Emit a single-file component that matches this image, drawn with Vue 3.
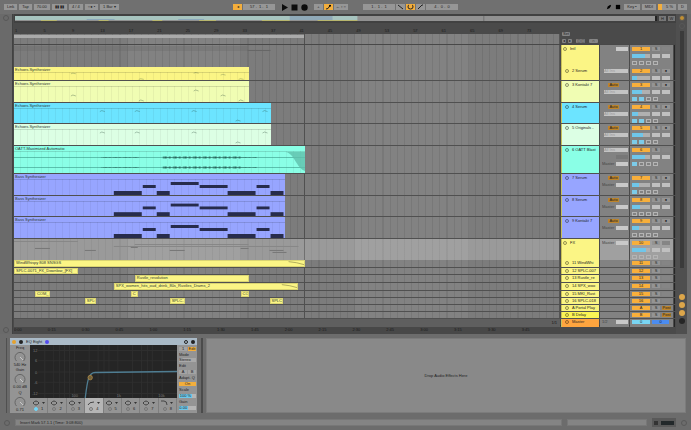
<script setup>
// Horizontal extent of the arrangement, in timeline units.
const SPAN = 546
const pct = (v) => (v / SPAN) * 100 + '%'

const bassNotes = [
  [100, 28, 2], [129, 13, 1], [143, 13, 2], [157, 28, 0],
  [186, 28, 1], [214, 28, 2], [243, 13, 1], [257, 13, 2],
]
const bassRows = [8, 11, 17]

const chirpsA = [[57, 14], [125, 19], [180, 9], [207, 14], [225, 19]]
const chirpsB = [[86, 8], [121, 8], [178, 8], [222, 18], [249, 8]]
const chirpsC = [[57, 10], [125, 19], [180, 9], [207, 12], [225, 19]]

const wave = []
for (let i = 0; i < 78; i++) {
  const x = 87 + i * 2
  const loud = x > 147 && x < 229
  if (x > 124 && x < 148) continue
  const k = (i * 7) % 5
  wave.push({ x, h: loud ? (k > 1 ? 2 : 1) : 1, o: loud ? 0.3 + k * 0.1 : 0.2 + k * 0.06 })
}

const synth = 'Echoes.Synthesizer'
const bass = 'Bass Synthesizer'

const tracks = [
  { name: 'Intl', size: 'h22', color: 'yellow', group: true, io: ['half'], no: '1', lines: 3, pan: 12 },
  { name: '2 Serum', size: 'h14', color: 'yellow', io: ['box'], no: '2', lines: 2, pan: 5, rec: true,
    clips: [{ x: 0, w: 235, text: synth, kind: 'chirp', marks: chirpsC }] },
  { name: '3 Kontakt 7', size: 'h22', color: 'lime', io: ['auto', 'box'], no: '3', lines: 3, pan: 9, send: 2, rec: true,
    clips: [{ x: 0, w: 235, text: synth, kind: 'chirp', marks: chirpsA }] },
  { name: '4 Serum', size: 'h21', color: 'cyan', io: ['auto', 'box'], no: '4', lines: 3, pan: 6, send: 2, rec: true,
    clips: [{ x: 0, w: 257, text: synth, kind: 'chirp', marks: chirpsB }] },
  { name: '5 Originals -', size: 'h22', color: 'mint', io: ['auto', 'box'], no: '5', lines: 3, pan: 10, send: 2, rec: true,
    clips: [{ x: 0, w: 257, text: synth, kind: 'chirp', marks: chirpsB }] },
  { name: '6 OATT Blast', size: 'h28', color: 'aqua', io: ['box', 'pair', 'half'], no: '6', lines: 3, pan: 12, send: 1,
    clips: [{ x: 0, w: 292, text: 'OATT-Maximized Automatio', kind: 'audio' }] },
  { name: '7 Serum', size: 'h22', color: 'blue', io: ['auto', 'half'], no: '7', lines: 3, pan: 7, send: 1, rec: true,
    clips: [{ x: 0, w: 271, text: bass, kind: 'bass' }] },
  { name: '8 Serum', size: 'h21', color: 'blue', io: ['auto', 'half'], no: '8', lines: 3, pan: 8, rec: true,
    clips: [{ x: 0, w: 271, text: bass, kind: 'bass' }] },
  { name: '9 Kontakt 7', size: 'h22', color: 'blue', io: ['auto', 'half'], no: '9', lines: 3, pan: 7, rec: true,
    clips: [{ x: 0, w: 271, text: bass, kind: 'bass' }] },
  { name: 'FX', size: 'h21', color: 'yellow', group: true, selected: true, io: ['master'], no: '10', lines: 3, pan: 13 },
  { name: '11 WindWhi', size: 'h8', color: 'yellow', io: [], no: '11', lines: 1,
    clips: [{ x: 0, w: 292, text: 'WindWhispy 808 SNSGS', kind: 'fade' }] },
  { name: '12 SPLC-007', size: 'h7', color: 'yellow', io: [], no: '12', lines: 1,
    clips: [{ x: 0, w: 64, text: 'SPLC-0071_FX_Downlow_[FX]' }] },
  { name: '13 Rustle_re', size: 'h8', color: 'yellow', io: [], no: '13', lines: 1,
    clips: [{ x: 121, w: 114, text: 'Rustle_revolution' }] },
  { name: '14 SPX_woo', size: 'h8', color: 'yellow', io: [], no: '14', lines: 1,
    clips: [{ x: 100, w: 185, text: 'SPX_women_hits_oud_drink_80s_Rustles_Drams_2', kind: 'fade' }] },
  { name: '15 MKI_Rust', size: 'h7', color: 'yellow', io: [], no: '15', lines: 1,
    clips: [{ x: 21, w: 15, text: 'COM_' }, { x: 117, w: 7, text: 'C' }, { x: 227, w: 8, text: 'CO' }] },
  { name: '16 SPLC-018', size: 'h7', color: 'yellow', io: [], no: '16', lines: 1,
    clips: [{ x: 71, w: 11, text: 'SPLC' }, { x: 156, w: 15, text: 'SPLC-' }, { x: 256, w: 14, text: 'SPLC' }] },
  { name: 'A Portal Play', size: 'h7', color: 'lemon', io: [], no: 'A', lines: 1, post: true },
  { name: 'B Delay', size: 'h7', color: 'bright', io: [], no: 'B', lines: 1, post: true },
]

const bars = Array.from({ length: 19 }, (_, i) => i * 4 + 1)
const times = Array.from({ length: 16 }, (_, i) => {
  const s = i * 15
  return Math.floor(s / 60) + ':' + String(s % 60).padStart(2, '0')
})
const leftTools = ['Link', 'Tap', '70.00', '▮▮ ▮▮', '4 / 4', '○●  •', '1 Bar ▾']
const bands = [1, 2, 3, 4, 5, 6, 7, 8]
const knobs = [['Freq', '540 Hz'], ['Gain', '0.00 dB'], ['Q', '0.71']]
const ioText = { half: '', pair: '', master: 'Master' }
</script>

<template>
  <div class="app">
    <header class="toolbar">
      <div class="tools">
        <button v-for="t in leftTools" :key="t" class="tool">{{ t }}</button>
      </div>
      <div class="tools center">
        <button class="tool on sq" aria-label="Follow">◂</button>
        <button class="tool wide">57 .&nbsp; 1 .&nbsp; 1</button>
        <div class="transport">
          <button aria-label="Play"><svg viewBox="0 0 7 7"><path d="M1 0L7 3.5L1 7Z" /></svg></button>
          <button aria-label="Stop"><svg viewBox="0 0 7 7"><path d="M0.5 0.5H6.5V6.5H0.5Z" /></svg></button>
          <button aria-label="Record"><svg viewBox="0 0 7 7"><circle cx="3.5" cy="3.5" r="3.2" /></svg></button>
        </div>
        <button class="tool sq">+</button>
        <button class="tool on sq" aria-label="Automation arm">
          <svg viewBox="0 0 7 6"><path d="M1 5L3 4.5L5 1.5H6" class="stroke" /><circle cx="5" cy="1.8" r="1" /></svg>
        </button>
        <button class="tool session">← ▫ ○</button>
        <button class="tool wide gapped">1 .&nbsp; 1 .&nbsp; 1</button>
        <button class="tool sq" aria-label="Punch in"><svg viewBox="0 0 7 6"><path d="M1 1L6 5" class="stroke" /></svg></button>
        <button class="tool on sq" aria-label="Loop"><svg viewBox="0 0 7 6"><path d="M2 1Q1 1 1 3Q1 5 3.5 5Q6 5 6 3Q6 1 5 1" class="stroke" /></svg></button>
        <button class="tool sq" aria-label="Punch out"><svg viewBox="0 0 7 6"><path d="M1 5L5 1H6" class="stroke" /></svg></button>
        <button class="tool wide">4 .&nbsp; 0 .&nbsp; 0</button>
      </div>
      <div class="tools right">
        <button class="plain" aria-label="Draw mode"><svg viewBox="0 0 7 7"><path d="M1 6L2 3L5 1L6 2L4 5Z" /></svg></button>
        <button class="plain" aria-label="Keyboard"><svg viewBox="0 0 7 7"><path d="M1 1H6V6H1Z" /></svg></button>
        <button class="tool">Key ▪</button>
        <button class="tool">MIDI</button>
        <div class="cpu"><span class="cpu-bar"></span>5 %</div>
        <button class="tool">D</button>
      </div>
    </header>

    <main class="arranger">
      <div class="rail left">
        <span class="ring"></span>
        <span class="ring"></span>
      </div>

      <section class="board">
        <div class="overview">
          <div class="strip">
            <svg viewBox="0 0 643 5" preserveAspectRatio="none">
              <rect width="643" height="5" fill="#919191" />
              <rect width="344" height="4" fill="#a7c4bf" />
              <rect x="276" width="43" height="4" fill="#8fa9b8" />
              <path d="M26 4.5H42M84 4.5H94M138 4.5H148M185 4.5H202M248 4.5H276M304 4.5H344" stroke="#b7b56c" />
              <path d="M72 3.5H100M164 3.5H190" stroke="#8aa7ba" />
              <path d="M471 0V5" stroke="#707070" />
            </svg>
          </div>
          <button class="mini">H</button>
          <button class="mini">W</button>
        </div>

        <div class="head">
          <div class="rulers">
            <div class="ruler"><span v-for="b in bars" :key="b">{{ b }}</span></div>
            <div class="lane loop"><div class="brace"></div></div>
          </div>
          <div class="locators">
            <button class="chip">Set</button>
            <div><button class="chip">◂</button><button class="chip">▸</button><button class="chip wide-chip">◫◫</button><button class="chip wide-chip">∩</button></div>
          </div>
        </div>

        <div v-for="t in tracks" :key="t.no" class="track" :class="[t.size, { selected: t.selected }]">
          <div class="lane">
            <svg v-if="t.no === '1'" class="sketch" viewBox="0 0 546 22" preserveAspectRatio="none">
              <rect y="1" width="234" height="5" fill="#666" opacity="0.3" />
              <path d="M234 5.5H257" stroke="#666" />
            </svg>
            <svg v-if="t.no === '10'" class="sketch" viewBox="0 0 546 21" preserveAspectRatio="none">
              <path d="M0 2.5H64M100 7.5H285M121 5.5H235" stroke="#878787" />
              <path d="M21 9.5H36M71 11.5H82M117 8.5H124M156 11.5H171M227 9.5H235M256 11.5H270M259 13.5H273" stroke="#777" />
            </svg>
            <div v-for="(c, i) in t.clips" :key="i" class="clip" :class="[t.color, c.kind, { short: t.lines === 1 }]"
              :style="{ left: pct(c.x), width: pct(c.w) }">
              <span class="clip-name">{{ c.text }}</span>
              <svg v-if="c.kind === 'bass'" viewBox="0 0 271 21" preserveAspectRatio="none">
                <rect v-for="(n, j) in bassNotes" :key="j" :x="n[0]" :y="bassRows[n[2]]" :width="n[1]" :height="n[2] === 2 ? 4 : 3" fill="#272c4c" />
              </svg>
              <svg v-if="c.kind === 'chirp'" :viewBox="`0 0 ${c.w} 21`" preserveAspectRatio="none">
                <path v-for="(m, j) in c.marks" :key="j" :d="`M${m[0]} ${m[1] + 1}L${m[0] + 2} ${m[1]}L${m[0] + 5} ${m[1] + 1}`"
                  fill="none" stroke="#21402f" stroke-width="0.8" opacity="0.4" />
              </svg>
              <svg v-if="c.kind === 'audio'" viewBox="0 0 292 27" preserveAspectRatio="none">
                <path d="M0 11.5H292M0 21.5H292" stroke="#2b8475" opacity="0.5" />
                <g v-for="(w, j) in wave" :key="j" fill="#123c36" :opacity="w.o">
                  <rect :x="w.x" :y="11.5 - w.h / 2" width="2" :height="w.h" />
                  <rect :x="w.x" :y="21.5 - w.h / 2" width="2" :height="w.h" />
                </g>
                <path d="M272 6C281 7 283 23 292 25V6Z" fill="#5fbfab" opacity="0.8" />
              </svg>
              <svg v-if="c.kind === 'fade'" :viewBox="`0 0 ${c.w} 8`" preserveAspectRatio="none">
                <path :d="`M${c.w - 16} 1Q${c.w - 8} 2 ${c.w} 6`" fill="none" stroke="#8b8848" stroke-width="0.8" />
              </svg>
            </div>
          </div>
          <div class="name" :class="[t.color, { indent: !t.group }]"><i class="fold"></i><span>{{ t.name }}</span></div>
          <div class="io">
            <template v-for="(k, i) in t.io" :key="i">
              <button v-if="k === 'auto'" class="io-auto">Auto</button>
              <div v-else class="io-line" :class="k">
                <span v-if="k !== 'box'">{{ k === 'half' && t.no !== '1' ? 'Master' : ioText[k] }}</span>
                <select :aria-label="t.name + ' routing'"><option>{{ k === 'box' ? 'All Ins' : '' }}</option></select>
              </div>
            </template>
          </div>
          <div class="mix">
            <div class="mix-line">
              <button class="num">{{ t.no }}</button><button class="solo">S</button>
              <button v-if="t.post" class="post">Post</button>
              <button v-else class="arm" :class="{ faint: !t.rec }" :aria-label="'Arm ' + t.name">{{ t.rec ? '●' : '' }}</button>
            </div>
            <div v-if="t.lines > 1" class="mix-line">
              <span class="slider"><span :style="{ width: (t.pan / 17) * 100 + '%' }"></span></span><span class="val"></span><span class="val"></span>
            </div>
            <div v-if="t.lines > 2" class="mix-line sends">
              <span :class="{ lit: t.send }"></span><span :class="{ lit: t.send > 1 }"></span><span></span><span></span>
            </div>
          </div>
          <div class="meter"></div>
        </div>

        <div class="track h7 master-row">
          <div class="grid-size">1/1</div>
          <div class="name orange indent"><i class="fold"></i><span>Master</span></div>
          <div class="io"><div class="io-line half"><span>1/2</span><select aria-label="Master output"><option></option></select></div></div>
          <div class="mix"><div class="mix-line"><button class="num cyan">0</button><button class="cue">0</button></div></div>
          <div class="meter"></div>
        </div>

        <div class="times"><span v-for="t in times" :key="t">{{ t }}</span></div>
      </section>

      <div class="rail side">
        <span class="ring gold"></span>
        <span class="ring"></span>
        <span class="scroll"></span>
        <button class="dot" aria-label="Show input and output"></button>
        <button class="dot" aria-label="Show sends"></button>
        <button class="dot" aria-label="Show mixer"></button>
        <button class="dot off" aria-label="Show delays"></button>
      </div>
    </main>

    <section class="detail">
      <article class="device">
        <header class="device-head">
          <i class="lamp"></i><i class="lamp dark"></i><span>EQ Eight</span><i class="lamp violet"></i>
          <b></b><i class="lamp hollow"></i><i class="lamp dark"></i>
        </header>
        <div class="device-body">
          <div class="knobs">
            <div v-for="k in knobs" :key="k[0]" class="knob">
              <span>{{ k[0] }}</span>
              <svg viewBox="0 0 12 11"><path d="M2.5 10A5 5 0 1 1 9.5 10" class="dial" /><path d="M6 6L9 9" class="hand" /></svg>
              <span>{{ k[1] }}</span>
            </div>
          </div>
          <div class="eq">
            <svg class="graph" viewBox="0 0 149 52" preserveAspectRatio="none">
              <rect width="149" height="52" fill="#252525" />
              <path d="M15 0V52M24 0V52M30 0V52M35 0V52M40 0V52M45 0V52M60 0V52M69 0V52M75 0V52M80 0V52M89 0V52M104 0V52M113 0V52M119 0V52M124 0V52M134 0V52M8 5.5H149M8 15.5H149M8 26.5H149M8 36.5H149M8 47.5H149" stroke="#2e2e2e" fill="none" />
              <g fill="#7a7a7a" class="axis">
                <text x="3" y="7">12</text><text x="5" y="17">6</text><text x="5" y="28">0</text><text x="4" y="38">-6</text><text x="2" y="49">-12</text>
                <text x="42" y="51">100</text><text x="88" y="51">1k</text><text x="130" y="51">10k</text>
              </g>
              <path d="M56 52C58 36 59 27 66 27L149 26" fill="none" stroke="#4f7d92" stroke-width="1.3" />
              <circle cx="61" cy="32" r="2.2" fill="#71603a" stroke="#b08a45" stroke-width="0.8" />
            </svg>
            <div class="bands">
              <div v-for="b in bands" :key="b" class="band" :class="{ current: b === 4 }">
                <button :aria-label="'Filter shape ' + b">
                  <svg viewBox="0 0 14 6"><path :d="b === 4 ? 'M1 5Q2 2 7 2' : b === 8 ? 'M1 1H4Q7 1 7 5' : 'M1 3Q4 -1 7 3Q4 7 1 3'" class="shape" /><path d="M10 2H13L11.5 4Z" /></svg>
                </button>
                <label><input type="checkbox" :checked="b === 1" />{{ b }}</label>
              </div>
            </div>
          </div>
          <div class="options">
            <div class="seg"><button>1</button><button class="on">Edit</button></div>
            <label>Mode<select><option>Stereo</option></select></label>
            <span>Edit</span>
            <div class="seg"><button>A</button><button>B</button></div>
            <span>Adapt. Q</span>
            <button class="full on">On</button>
            <span>Scale</span>
            <div class="value"><b>100 %</b></div>
            <span>Gain</span>
            <div class="value low"><b>0.00</b></div>
          </div>
        </div>
      </article>
      <div class="drop">Drop Audio Effects Here</div>
    </section>

    <footer class="status">
      <span class="ring"></span>
      <div class="msg">Insert Mark 57.1.1 (Time: 3:08:800)</div>
      <div class="msg small"></div>
      <div class="midi"><i></i><b></b></div>
      <span class="ring"></span>
    </footer>
  </div>
</template>

<style>
body {
  margin: 0;
  background: #6c6c6c;
}
</style>

<style scoped>
.app, .app * { box-sizing: border-box; }
.app {
  min-height: 100vh;
  display: flex;
  flex-direction: column;
  background: #6c6c6c;
  font: 4px/4px "Liberation Sans", Arial, sans-serif;
  color: #222;
}
button, select, input {
  appearance: none;
  margin: 0;
  padding: 0;
  border: 0;
  border-radius: 0;
  font: inherit;
  color: inherit;
  background: none;
  overflow: hidden;
}
svg { display: block; }

.toolbar {
  height: 14px;
  display: grid;
  grid-template-columns: 1fr auto 1fr;
  align-items: center;
  padding: 0 4px;
  background: #707070;
}
.tools { display: flex; align-items: center; gap: 2px; }
.center { gap: 1px; }
.right { justify-content: flex-end; }
.tool {
  height: 6px;
  padding: 0 3px;
  background: #969696;
  display: flex;
  align-items: center;
  justify-content: center;
  white-space: nowrap;
}
.tool svg { width: 7px; height: 6px; }
.tools .sq { width: 9px; padding: 0 1px; }
.tools .on { background: #f3ae3c; }
.session { width: 14px; padding: 0; }
.wide { width: 32px; }
.gapped { margin-left: 14px; }
.stroke { fill: none; stroke: #222; stroke-width: 1; }
.transport { display: flex; gap: 3px; padding: 0 5px; }
.transport button, .plain { width: 7px; height: 7px; }
.transport svg { width: 7px; height: 7px; fill: #0c0c0c; }
.plain svg { width: 6px; height: 6px; }
.cpu { height: 6px; width: 18px; display: flex; gap: 4px; align-items: center; background: #969696; }
.cpu-bar { width: 4px; height: 6px; background: #f3ae3c; }

.arranger { display: flex; background: #4a4a4a; }
.rail { display: flex; flex-direction: column; align-items: center; }
.left { width: 13px; background: #6a6a6a; justify-content: space-between; padding: 1px 0; border-right: 1px solid #424242; }
.ring { width: 6px; height: 6px; border: 1px solid #585858; border-radius: 50%; flex: none; }
.gold { background: #c29033; }
.side { width: 15px; padding: 1px 0 10px; gap: 2px; border-right: 4px solid #6c6c6c; background: #4f4f4f; }
.scroll { width: 4px; flex: 1; margin-bottom: 24px; background: #3b3b3b; }
.dot { width: 6px; height: 6px; border-radius: 50%; background: #dda64a; flex: none; }
.off { background: #262626; }

.board { flex: 1; min-width: 0; padding-left: 1px; }
.overview { height: 9px; display: flex; align-items: center; gap: 2px; padding: 0 1px; background: #414141; }
.strip { flex: 1; border-right: 2px solid #222; }
.strip svg { width: 100%; height: 5px; }
.mini { width: 7px; height: 5px; background: #777; text-align: center; }

.head { display: flex; height: 22px; border-bottom: 1px solid #484848; }
.rulers { flex: 1; }
.ruler, .times { display: flex; color: #1a1a1a; }
.ruler { height: 11px; padding: 6px 0 0 1px; background: #4a4a4a; overflow: hidden; }
.ruler span { flex: none; width: 5.22%; }
.loop { height: 10px; padding-top: 1px; }
.brace { width: 53.3%; height: 3px; background: #aaa; }
.locators { width: 116px; padding: 9px 2px 0; display: grid; gap: 2px; justify-items: start; }
.locators > div { display: flex; gap: 2px; }
.chip { height: 4px; padding: 0 1px; border-radius: 1px; background: #858585; }
.wide-chip { width: 9px; margin-left: 2px; }

.track { display: grid; grid-template-columns: 1fr 39px 30px 44px 3px; border-bottom: 1px solid #505050; }
.h28 { height: 28px; }
.h22 { height: 22px; }
.h21 { height: 21px; }
.h14 { height: 14px; }
.h8 { height: 8px; }
.h7 { height: 7px; }
.lane {
  position: relative;
  min-width: 0;
  border-right: 1px solid #555;
  background:
    linear-gradient(#505050, #505050) 53.4% 0 / 1px 100% no-repeat,
    repeating-linear-gradient(90deg, #0000 0 1.1%, #00000014 1.1% 1.304%),
    repeating-linear-gradient(90deg, #7c7c7c 0 20.9%, #828282 20.9% 41.7%);
}
.selected .lane {
  background:
    linear-gradient(#707070, #707070) 53.4% 0 / 1px 100% no-repeat,
    repeating-linear-gradient(90deg, #0000 0 1.1%, #0000000c 1.1% 1.304%),
    repeating-linear-gradient(90deg, #9a9a9a 0 20.9%, #a0a0a0 20.9% 41.7%);
}
.selected .io, .selected .mix { background: #a0a0a0; }
.sketch { width: 100%; height: 100%; }

.clip { position: absolute; top: 0; bottom: 0; overflow: hidden; }
.clip::before {
  content: "";
  position: absolute;
  inset: 5px 0 0;
  border-top: 1px solid #0002;
  background: repeating-linear-gradient(90deg, #0000 0 6px, #0000000c 6px 7px);
}
.short::before { display: none; }
.clip svg { position: absolute; inset: 0; width: 100%; height: 100%; }
.clip-name { position: absolute; top: 1px; left: 1px; white-space: nowrap; color: #2d3a34; }
.short { border: 1px solid #0002; }
.short .clip-name { top: 0; }

.yellow { background: #fbf585; }
.lime { background: #f0fdb3; }
.cyan { background: #6ce4ff; }
.mint { background: #dcffe4; }
.aqua { background: #8affe6; }
.blue { background: #97a5ff; }
.lemon { background: #f8f27c; }
.bright { background: #fbf455; }
.orange { background: #ffa53f; }

.name { display: flex; gap: 3px; padding: 2px 1px 0; margin-left: 1px; overflow: hidden; white-space: nowrap; border-left: 1px solid #c9c05a; }
.h7 .name, .h8 .name { padding-top: 1px; }
.name.indent { padding-left: 3px; }
.fold { width: 4px; height: 4px; border: 1px solid #0006; border-radius: 50%; flex: none; }

.io { padding: 2px 1px 0 2px; margin-left: 1px; display: flex; flex-direction: column; gap: 3px; background: #828282; overflow: hidden; }
.io-line { height: 4px; display: flex; align-items: center; justify-content: flex-end; gap: 1px; flex: none; overflow: hidden; }
.io-line select { height: 4px; width: 12px; background: #c9c9c9; }
.io-line.box select { width: 24px; color: #999; background: #c4c4c4; }
.io-line.pair select { background: #777; }
.io-line span { flex: 1; color: #444; }
.io-auto { height: 4px; width: 11px; margin-left: 6px; background: #bd842b; flex: none; }
.h7 .io, .h8 .io, .h7 .mix, .h8 .mix { padding-top: 1px; }

.mix { padding: 2px 2px 0 2px; margin-left: 1px; display: flex; flex-direction: column; gap: 3px; background: #828282; overflow: hidden; }
.mix-line { height: 4px; display: flex; gap: 2px; flex: none; }
.mix-line button { height: 4px; text-align: center; }
.num { width: 18px; background: #f8af3c; }
.num.cyan { background: #79d5f3; }
.solo, .arm { width: 8px; background: #949494; }
.arm { color: #111; }
.arm.faint { background: #858585; }
.post { width: 9px; background: #bd842b; }
.cue { width: 17px; background: #4b8cf0; }
.slider { width: 18px; background: #b0b0b0; }
.slider span { display: block; height: 4px; background: #6fc6ea; }
.val { width: 8px; background: #c0c0c0; }
.sends span { width: 5px; border: 1px solid #b4b4b4; }
.sends .lit { background: #7ccbe9; border-color: #7ccbe9; }
.meter { border-left: 1px solid #4a4a4a; background: #262626; border-right: 1px solid #4a4a4a; }

.master-row { border-bottom-color: #3c3c3c; }
.grid-size { padding: 2px 3px; text-align: right; color: #161616; background: #5f5f5f; }
.times { height: 8px; padding: 2px 0 0; background: #484848; overflow: hidden; margin-right: 116px; }
.times span { flex: none; width: 6.2%; }

.detail { flex: 1; display: grid; grid-template-columns: 197px 1fr; gap: 3px; padding: 4px 5px 2px 6px; }
.device { display: flex; flex-direction: column; padding: 0 4px 0 3px; border-right: 2px solid #4b4b4b; border-left: 1px solid #505050; background: #6a6a6a; }
.device-head { height: 7px; display: flex; align-items: center; gap: 3px; padding: 0 2px; background: #aabac7; }
.device-head b { flex: 1; }
.lamp { width: 4px; height: 4px; border-radius: 50%; background: #e6a12c; }
.lamp.dark { background: #222; }
.lamp.violet { background: #544bf0; }
.lamp.hollow { background: none; border: 1px solid #222; }
.device-body { flex: 1; display: grid; grid-template-columns: 20px 1fr 20px; background: #949494; }
.knobs { display: flex; flex-direction: column; justify-content: space-around; }
.knob { text-align: center; }
.knob span { display: block; white-space: nowrap; }
.knob svg { width: 12px; height: 11px; margin: 1px auto; }
.dial { fill: none; stroke: #666; stroke-width: 1; }
.hand { stroke: #c9c9c9; stroke-width: 1; }
.eq { display: flex; flex-direction: column; min-width: 0; }
.graph { width: 100%; flex: 1; min-height: 52px; }
.axis { font-size: 4px; }
.bands { height: 15px; display: grid; grid-template-columns: repeat(8, 1fr); }
.band { border-right: 1px solid #7e7e7e; display: grid; justify-items: center; align-content: center; gap: 1px; }
.band.current { background: #b5b5b5; }
.band button { width: 14px; height: 6px; }
.band svg { width: 14px; height: 6px; fill: #333; }
.band .shape { fill: none; stroke: #444; stroke-width: 1; }
.band label { display: flex; gap: 3px; }
.band input { width: 4px; height: 4px; border-radius: 50%; border: 1px solid #777; }
.band input:checked { background: #71d3f4; border-color: #71d3f4; }
.options { display: flex; flex-direction: column; justify-content: space-between; padding: 2px 1px 3px 2px; white-space: nowrap; overflow: hidden; }
.options > * { flex: none; }
.seg { display: flex; gap: 1px; }
.seg button { flex: 1; height: 4px; background: #a3a3a3; }
.options .on { background: #f3ae3c; }
.options label { display: grid; gap: 1px; }
.options select { height: 4px; background: #a9a9a9; }
.full { height: 4px; }
.value { height: 4px; background: #b5b5b5; }
.value b { display: block; width: 75%; font-weight: normal; text-align: center; background: #6dc8ea; }
.low b { width: 50%; }
.drop { display: flex; align-items: center; justify-content: center; background: #898989; border: 1px solid #7c7c7c; }

.status { height: 15px; display: flex; align-items: center; gap: 5px; padding: 0 4px; }
.msg { flex: 1; height: 7px; padding: 1px 4px; background: #848484; border: 1px solid #777; }
.msg.small { flex: none; width: 80px; }
.midi { width: 24px; height: 9px; display: flex; align-items: center; gap: 3px; padding: 0 2px; background: #595959; }
.midi i { width: 4px; height: 4px; background: #333; }
.midi b { flex: 1; height: 4px; background: #22282a; }
</style>
